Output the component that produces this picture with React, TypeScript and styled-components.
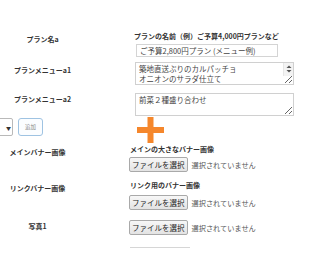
import React from "react";
import styled, { createGlobalStyle } from "styled-components";

const GlobalStyle = createGlobalStyle`
  html, body {
    margin: 0;
    padding: 0;
    background: #ffffff;
  }
  body {
    font-family: "Noto Sans CJK JP", "Noto Sans", sans-serif;
    color: #333;
  }
`;

const Page = styled.div`
  width: 310px;
  height: 260px;
  overflow: hidden;
  padding-top: 30px;
  box-sizing: border-box;
`;

const FormTable = styled.div<{ labelWidth: number; fieldStart: number }>`
  display: grid;
  grid-template-columns: ${(p) => `${p.labelWidth}px ${p.fieldStart - p.labelWidth}px 1fr`};
  row-gap: 0;
`;

const Row = styled.div<{ gap: number }>`
  display: contents;
  & > * {
    margin-top: ${(p) => `${p.gap}px`};
  }
`;

const Label = styled.div<{ offset: number }>`
  grid-column: 1;
  padding-top: ${(p) => `${p.offset}px`};
  font-size: 7px;
  line-height: 10px;
  font-weight: 700;
  text-align: center;
  color: #333;
  white-space: nowrap;
`;

const Field = styled.div`
  grid-column: 3;
  display: flex;
  flex-direction: column;
  align-items: flex-start;
`;

const Hint = styled.div`
  font-size: 7px;
  line-height: 12px;
  font-weight: 700;
  color: #333;
  white-space: nowrap;
  margin-left: -2px;
`;

const SmallHint = styled(Hint)`
  line-height: 10px;
  margin-left: 0;
`;

const TextInput = styled.div`
  margin-top: 2px;
  width: 142px;
  height: 13px;
  box-sizing: border-box;
  border: 1px solid #d4d4d4;
  padding: 0 3px;
  font-size: 7.5px;
  line-height: 11px;
  color: #444;
  white-space: nowrap;
`;

const AreaWrap = styled.div`
  position: relative;
  width: 159px;
  margin-left: -1px;
`;

const TextArea = styled.textarea<{ rows: number }>`
  display: block;
  width: 159px;
  height: 23px;
  box-sizing: border-box;
  border: 1px solid #d0d0d0;
  border-radius: 0;
  padding: 1px 3px;
  margin: 0;
  font-family: "Noto Sans CJK JP", "Noto Sans", sans-serif;
  font-size: 7.5px;
  line-height: 9.5px;
  color: #444;
  overflow: hidden;
  outline: none;
`;

const ScrollBar = styled.div`
  position: absolute;
  top: 1px;
  right: 1px;
  bottom: 9px;
  width: 10px;
  background: #f3f3f3;
  border-left: 1px solid #e6e6e6;
  display: flex;
  justify-content: center;
  padding-top: 2px;
  box-sizing: border-box;
`;

const AddRow = styled.div`
  position: relative;
  display: flex;
  align-items: center;
  gap: 5px;
  margin-top: 2px;
  height: 18px;
`;

const SelectStub = styled.div`
  width: 23px;
  height: 18px;
  margin-left: -10px;
  box-sizing: border-box;
  border: 1px solid #b9b9b9;
  border-radius: 2px;
  display: flex;
  align-items: center;
  justify-content: flex-end;
  padding-right: 1px;
  font-size: 5px;
  color: #333;
`;

const AddButton = styled.div`
  width: 25px;
  height: 18px;
  box-sizing: border-box;
  border: 1px solid #9fc3e2;
  border-radius: 3px;
  background: #fbfdff;
  display: flex;
  align-items: center;
  justify-content: center;
  font-size: 5.5px;
  color: #8a8a8a;
`;

const PlusMark = styled.svg`
  position: absolute;
  left: 137px;
  top: -1px;
`;

const FileRow = styled.div<{ top: number }>`
  display: flex;
  align-items: center;
  margin-top: ${(p) => `${p.top}px`};
  margin-left: -1px;
`;

const FileButton = styled.div`
  height: 15px;
  box-sizing: border-box;
  border: 1px solid #a9a9a9;
  border-radius: 2px;
  background: linear-gradient(#f7f7f7, #e3e3e3);
  padding: 0 2px;
  font-size: 7.5px;
  line-height: 13px;
  color: #222;
  white-space: nowrap;
`;

const FileStatus = styled.span`
  margin-left: 4px;
  font-size: 7.2px;
  color: #555;
  white-space: nowrap;
`;

const Divider = styled.div`
  margin: 12px 0 0 130px;
  width: 60px;
  height: 1px;
  background: #d6d6d6;
`;

const Arrows = () => (
  <svg width="6" height="8" viewBox="0 0 6 8">
    <path d="M3 0.5 L5.5 3 L0.5 3 Z" fill="#555" />
    <path d="M3 7.5 L5.5 5 L0.5 5 Z" fill="#555" />
  </svg>
);

const FilePicker: React.FC<{ top: number }> = ({ top }) => (
  <FileRow top={top}>
    <FileButton>ファイルを選択</FileButton>
    <FileStatus>選択されていません</FileStatus>
  </FileRow>
);

export default function App() {
  return (
    <Page>
      <GlobalStyle />
      <FormTable labelWidth={85} fieldStart={136}>
        <Row gap={0}>
          <Label offset={4}>プラン名a</Label>
          <Field>
            <Hint>プランの名前（例）ご予算4,000円プランなど</Hint>
            <TextInput>ご予算2,800円プラン (メニュー例)</TextInput>
          </Field>
        </Row>
        <Row gap={5}>
          <Label offset={3}>プランメニューa1</Label>
          <Field>
            <AreaWrap>
              <TextArea
                rows={2}
                readOnly
                defaultValue={"築地直送ぶりのカルパッチョ\nオニオンのサラダ仕立て"}
              />
              <ScrollBar>
                <Arrows />
              </ScrollBar>
            </AreaWrap>
          </Field>
        </Row>
        <Row gap={8}>
          <Label offset={1}>プランメニューa2</Label>
          <Field>
            <AreaWrap>
              <TextArea rows={2} readOnly defaultValue={"前菜２種盛り合わせ"} />
            </AreaWrap>
          </Field>
        </Row>
      </FormTable>

      <AddRow>
        <SelectStub>▼</SelectStub>
        <AddButton>追加</AddButton>
        <PlusMark width="27" height="26" viewBox="0 0 27 26">
          <rect x="10.5" y="0" width="6" height="26" fill="#f5872c" />
          <rect x="0" y="10" width="27" height="6" fill="#f5872c" />
        </PlusMark>
      </AddRow>

      <FormTable labelWidth={75} fieldStart={130}>
        <Row gap={8}>
          <Label offset={3}>メインバナー画像</Label>
          <Field>
            <SmallHint>メインの大きなバナー画像</SmallHint>
            <FilePicker top={3} />
          </Field>
        </Row>
        <Row gap={8}>
          <Label offset={3}>リンクバナー画像</Label>
          <Field>
            <SmallHint>リンク用のバナー画像</SmallHint>
            <FilePicker top={5} />
          </Field>
        </Row>
        <Row gap={10}>
          <Label offset={1}>写真1</Label>
          <Field>
            <FilePicker top={0} />
          </Field>
        </Row>
      </FormTable>
      <Divider />
    </Page>
  );
}
